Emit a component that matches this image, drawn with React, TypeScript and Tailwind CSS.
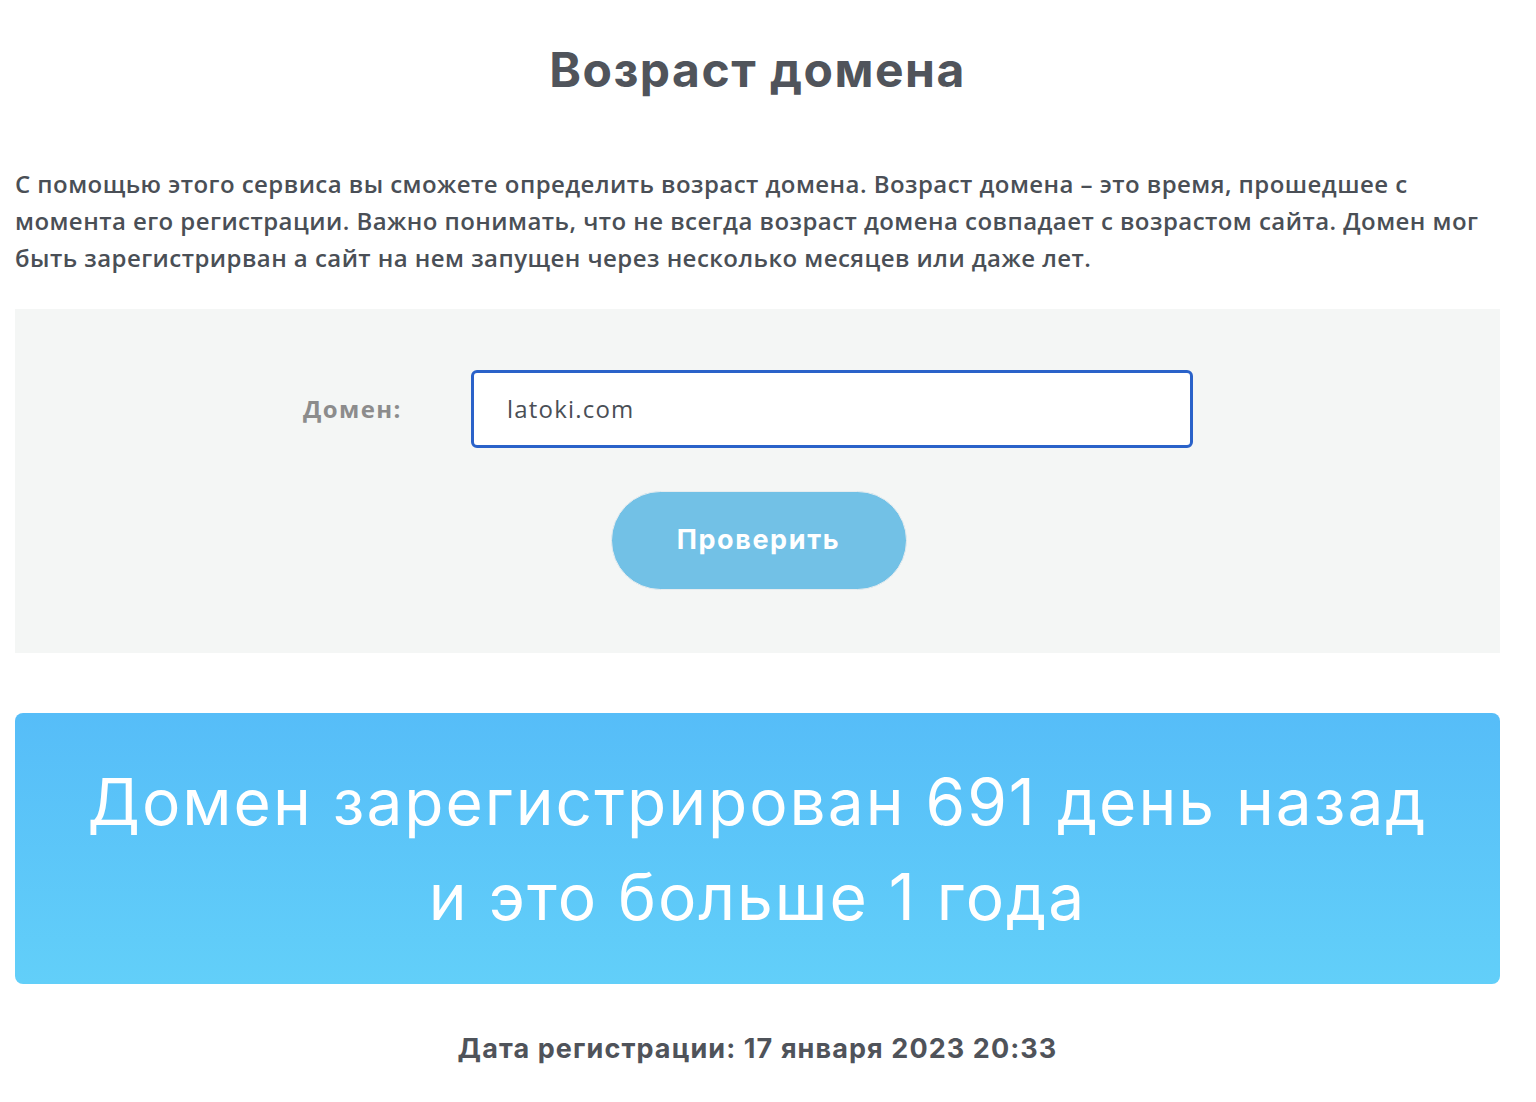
import React from "react";

export default function App() {
  return (
    <div className="min-h-[1102px] bg-white pl-[15px] pr-[36px]">
      <h1 className="pt-[40px] text-center text-[48px] tracking-[1.5px] font-bold leading-[60px] text-[#50545b] font-['Inter','Noto_Sans',sans-serif]">
        Возраст домена
      </h1>
      <p className="mt-[65px] text-[24px] leading-[37px] font-semibold tracking-[0.45px] text-[#4a4f56] font-['Open_Sans','Noto_Sans',sans-serif] whitespace-nowrap">
        С помощью этого сервиса вы сможете определить возраст домена. Возраст домена – это время, прошедшее с
        <br />
        момента его регистрации. Важно понимать, что не всегда возраст домена совпадает с возрастом сайта. Домен мог
        <br />
        быть зарегистрирван а сайт на нем запущен через несколько месяцев или даже лет.
      </p>
      <div className="mt-[33px] bg-[#f4f6f5] h-[344px] flex flex-col items-center pt-[61px]">
        <div className="flex items-center mr-[19px]">
          <label className="w-[168px] text-[24px] font-bold tracking-[1.4px] text-[#8c8c8c] font-['Open_Sans','Noto_Sans',sans-serif]">
            Домен:
          </label>
          <div className="w-[722px] h-[78px] bg-white border-[3px] border-[#2a62c9] rounded-[6px] flex items-center pl-[33px] text-[24px] tracking-[1.2px] text-[#4a4f56] font-medium font-['Open_Sans','Noto_Sans',sans-serif]">
            latoki.com
          </div>
        </div>
        <button className="mt-[43px] ml-[2px] w-[296px] h-[99px] rounded-full bg-[#72c1e6] border border-[#e6ecef] text-white text-[27px] tracking-[1.6px] font-bold font-['Inter','Noto_Sans',sans-serif]">
          Проверить
        </button>
      </div>
      <div className="mt-[60px] h-[271px] rounded-[8px] bg-gradient-to-b from-[#56bdf8] to-[#62cff9] flex flex-col items-center justify-center text-white text-[64px] tracking-[2px] leading-[95px] font-normal font-['Inter','Noto_Sans',sans-serif]">
        <div>Домен зарегистрирован 691 день назад</div>
        <div>и это больше 1 года</div>
      </div>
      <div className="mt-[45px] text-center text-[27px] tracking-[1.1px] font-bold text-[#4f535a] font-['Inter','Noto_Sans',sans-serif]">
        Дата регистрации: 17 января 2023 20:33
      </div>
    </div>
  );
}
